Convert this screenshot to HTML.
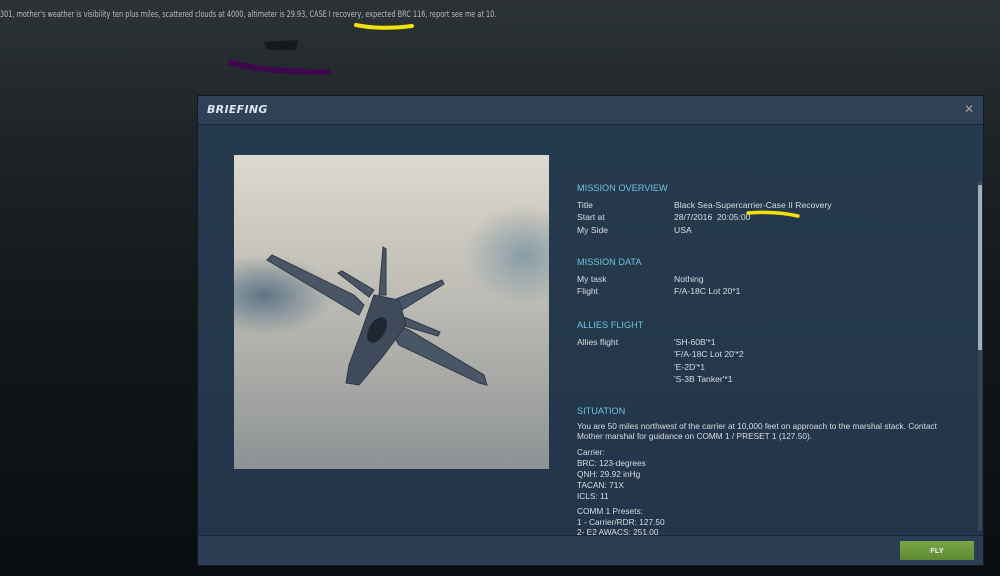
<!DOCTYPE html>
<html><head><meta charset="utf-8"><style>
*{margin:0;padding:0;box-sizing:border-box}
body{width:1000px;height:576px;overflow:hidden;position:relative;font-family:"Liberation Sans","DejaVu Sans",sans-serif;background:linear-gradient(180deg,#2c3336 0%,#1d2326 25%,#12171a 55%,#0b0e10 100%);}
.top{position:absolute;left:0;top:10px;font-family:"DejaVu Sans",sans-serif;font-size:8.6px;color:#b9bdbc;white-space:nowrap;transform:scaleX(0.758);transform-origin:0 0}
.dlg{position:absolute;left:197px;top:95px;width:787px;height:471px;background:#24364a;border:1px solid #11181f}
.hdr{height:29px;background:#2e4157;border-bottom:1px solid #1a2636;position:relative}
.hdr b{position:absolute;left:9px;top:7px;font-family:"DejaVu Sans",sans-serif;font-size:11px;font-style:italic;color:#dde6ee;font-weight:bold;letter-spacing:.3px}
.x{position:absolute;right:9px;top:6px;color:#a9a090;font-size:12px}
.body{position:absolute;left:0;top:30px;width:785px;height:410px;background:linear-gradient(180deg,#263a4e,#23354a)}
.img{position:absolute;left:36px;top:29px;width:315px;height:314px;background:
radial-gradient(ellipse 70px 40px at 30px 140px,rgba(70,100,125,.8),transparent),
radial-gradient(ellipse 60px 50px at 290px 100px,rgba(110,140,160,.7),transparent),
linear-gradient(180deg,#dcdad0 0%,#cfcbc0 20%,#bdbcb5 45%,#a9aaa6 70%,#8c9295 100%)}
.sec{position:absolute;left:379px;font-size:8.6px;color:#d8dde2}
.sec h{display:block;color:#6ec3de;font-size:9.2px;margin-bottom:6px}
.row{display:flex;line-height:12.3px}.row span:first-child{width:97px}
.ftr{position:absolute;left:0;bottom:0;width:785px;height:30px;background:#2b3d52;border-top:1px solid #1a2636}
.fly{position:absolute;right:9px;top:5px;width:74px;height:19px;background:linear-gradient(#7aa548,#5d8a33);color:#eef;font-size:7.5px;font-weight:bold;text-align:center;line-height:19px}
.sb{position:absolute;left:780px;top:55px;width:4px;height:350px;background:#394654}
.sb i{position:absolute;left:0;top:4px;width:4px;height:165px;background:#a8adb2}
.sit{position:absolute;left:379px;top:280px;font-size:8.3px;color:#d8dde2;line-height:10px;white-space:nowrap}
</style></head><body>
<div class="top">301, mother's weather is visibility ten plus miles, scattered clouds at 4000, altimeter is 29.93, CASE I recovery, expected BRC 116, report see me at 10.</div>
<svg style="position:absolute;left:0;top:0" width="1000" height="100">
<path d="M356 25 Q380 30 412 26" stroke="#f2e20a" stroke-width="4" fill="none" stroke-linecap="round"/>
<path d="M228 62 Q260 72 330 72" stroke="#3c0a4a" stroke-width="6" fill="none"/>
<path d="M264 42 L298 40 L296 50 L268 50Z" fill="#15191b"/>
</svg>
<div class="dlg">
<div class="hdr"><b>BRIEFING</b><span class="x">✕</span></div>
<div class="body">
<div class="img"><svg width="315" height="314">
<g fill="#4a5566" stroke="#2f3844" stroke-width="1">
<path d="M33 105 L38 100 L120 140 L130 150 L125 160 Z"/>
<path d="M150 165 L175 175 L250 220 L253 230 L245 228 L165 190 Z"/>
<path d="M104 118 L108 116 L140 135 L135 142 Z"/>
<path d="M165 160 L206 177 L204 181 L160 168 Z"/>
<path d="M145 140 L149 92 L152 94 L152 140 Z"/>
<path d="M160 145 L208 125 L210 129 L168 155 Z"/>
<path d="M140 140 L165 145 L172 170 L150 200 L125 230 L112 228 L115 210 L128 175 Z" fill="#3f4a5a"/>
</g>
<ellipse cx="143" cy="175" rx="8" ry="14" fill="#1f2630" transform="rotate(30 143 175)"/>
</svg></div>
<div class="sec" style="top:57px"><h>MISSION OVERVIEW</h>
<div class="row"><span>Title</span><span>Black Sea-Supercarrier-Case II Recovery</span></div>
<div class="row"><span>Start at</span><span>28/7/2016&nbsp; 20:05:00</span></div>
<div class="row"><span>My Side</span><span>USA</span></div></div>
<div class="sec" style="top:131px"><h>MISSION DATA</h>
<div class="row"><span>My task</span><span>Nothing</span></div>
<div class="row"><span>Flight</span><span>F/A-18C Lot 20*1</span></div></div>
<div class="sec" style="top:194px"><h>ALLIES FLIGHT</h>
<div class="row"><span>Allies flight</span><span>'SH-60B'*1<br>'F/A-18C Lot 20'*2<br>'E-2D'*1<br>'S-3B Tanker'*1</span></div></div>
<div class="sit"><div style="color:#6ec3de;font-size:9.2px;margin-bottom:5px">SITUATION</div>
<div>You are 50 miles northwest of the carrier at 10,000 feet on approach to the marshal stack. Contact<br>Mother marshal for guidance on COMM 1 / PRESET 1 (127.50).</div>
<div style="margin-top:6px;line-height:11px">Carrier:<br>BRC: 123-degrees<br>QNH: 29.92 inHg<br>TACAN: 71X<br>ICLS: 11</div>
<div style="margin-top:4px;line-height:10.5px">COMM 1 Presets:<br>1 - Carrier/RDR: 127.50<br>2- E2 AWACS: 251.00</div></div>
<div class="sb"><i></i></div>
</div>
<div class="ftr"><div class="fly">FLY</div></div>
</div>
<svg style="position:absolute;left:0;top:0" width="1000" height="576"><path d="M748 213 Q775 211 798 216" stroke="#f2e20a" stroke-width="3.5" fill="none" stroke-linecap="round"/></svg>
</body></html>
